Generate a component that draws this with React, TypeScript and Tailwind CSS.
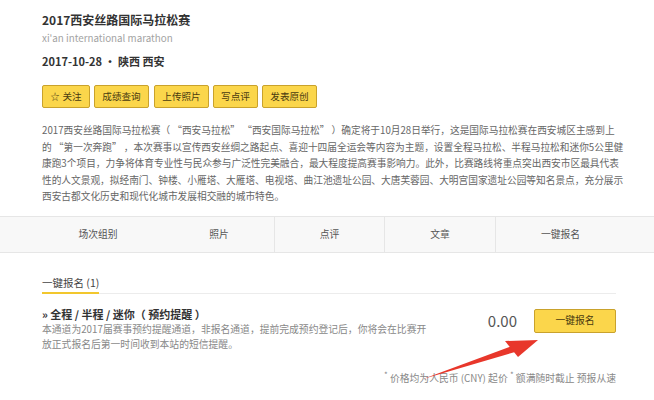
import React from "react";

const font = { fontFamily: '"Noto Sans CJK SC", "Noto Sans", sans-serif' };

const actions = ["成绩查询", "上传照片", "写点评", "发表原创"];

const intro = [
  "2017西安丝路国际马拉松赛（ “西安马拉松” “西安国际马拉松” ）确定将于10月28日举行，这是国际马拉松赛在西安城区主感到上",
  "的 “第一次奔跑” ，本次赛事以宣传西安丝绸之路起点、喜迎十四届全运会等内容为主题，设置全程马拉松、半程马拉松和迷你5公里健",
  "康跑3个项目，力争将体育专业性与民众参与广泛性完美融合，最大程度提高赛事影响力。此外，比赛路线将重点突出西安市区最具代表",
  "性的人文景观，拟经南门、钟楼、小雁塔、大雁塔、电视塔、曲江池遗址公园、大唐芙蓉园、大明宫国家遗址公园等知名景点，充分展示",
  "西安古都文化历史和现代化城市发展相交融的城市特色。",
];

function YellowButton({ children, className }: { children: React.ReactNode; className?: string }) {
  return (
    <button
      className={
        "flex items-center justify-center rounded-[2px] border border-[#c9a22c] bg-[#fbd64b] text-[9.6px] text-[#4a3b10] " +
        (className ?? "")
      }
    >
      {children}
    </button>
  );
}

export default function App() {
  return (
    <div className="relative h-[400px] w-[654px] overflow-hidden bg-white" style={font}>
      {/* 标题区 */}
      <div className="pl-[42px] pt-[11px]">
        <h1 className="h-[17px] text-[12px] font-bold leading-[17px] text-[#333]">2017西安丝路国际马拉松赛</h1>
        <p className="mt-[3px] text-[9.8px] leading-[14px] text-[#a3a3a3]">xi'an international marathon</p>
        <p className="mt-[8px] text-[11px] font-bold leading-[16px] text-[#333]">2017-10-28 • 陕西 西安</p>
        <div className="mt-[16px] flex gap-[4px]">
          <YellowButton className="h-[23px] w-[48px] gap-[3px]">
            <span className="text-[9px]">☆</span>关注
          </YellowButton>
          <YellowButton className="h-[23px] w-[55px]">{actions[0]}</YellowButton>
          <YellowButton className="ml-[1px] h-[23px] w-[55px]">{actions[1]}</YellowButton>
          <YellowButton className="h-[23px] w-[45px]">{actions[2]}</YellowButton>
          <YellowButton className="h-[23px] w-[55px]">{actions[3]}</YellowButton>
        </div>
      </div>

      {/* 简介 */}
      <div className="mt-[14px] pl-[42px] text-[9.7px] leading-[16.5px] text-[#666]">
        {intro.map((line) => (
          <div key={line} className="whitespace-nowrap">
            {line}
          </div>
        ))}
      </div>

      {/* 表头 */}
      <div className="mt-[11px] flex h-[37px] border-y border-[#e6e6e6] bg-[#f8f8f8] text-[9.8px] text-[#555]">
        <div className="flex w-[164px] items-center justify-center pl-[32px]">场次组别</div>
        <div className="flex w-[110px] items-center justify-center">照片</div>
        <div className="flex w-[110px] items-center justify-center border-l border-[#e6e6e6]">点评</div>
        <div className="flex w-[111px] items-center justify-center border-l border-[#e6e6e6]">文章</div>
        <div className="flex w-[130px] items-center justify-center border-l border-[#e6e6e6]">一键报名</div>
        <div className="flex-1" />
      </div>

      {/* 一键报名 */}
      <div className="ml-[42px] mr-[38px] mt-[22px]">
        <div className="flex border-b border-[#ececec]">
          <div className="-mb-px border-b-2 border-[#f2c72d] pb-[1px] text-[10.5px] leading-[16px] text-[#444]">
            一键报名 (1)
          </div>
        </div>

        <div className="mt-[12px] flex items-start justify-between">
          <div>
            <p className="text-[11px] font-bold leading-[16px] text-[#333]">» 全程 / 半程 / 迷你（ 预约提醒 ）</p>
            <p className="text-[9.8px] leading-[15px] text-[#888]">
              本通道为2017届赛事预约提醒通道，非报名通道，提前完成预约登记后，你将会在比赛开
              <br />
              放正式报名后第一时间收到本站的短信提醒。
            </p>
          </div>
          <div className="mt-[3px] flex items-center gap-[17px]">
            <span className="text-[15px] leading-[20px] text-[#555]">0.00</span>
            <YellowButton className="h-[24px] w-[82px] text-[9.8px]">一键报名</YellowButton>
          </div>
        </div>

        <p className="mt-[19px] text-right text-[9.8px] leading-[14px] text-[#888]">
          <sup className="text-[8px]">*</sup> 价格均为人民币 (CNY) 起价 <sup className="text-[8px]">*</sup> 额满随时截止 预报从速
        </p>
      </div>

      {/* 标注箭头 */}
      <svg className="absolute left-0 top-0" width="654" height="400" viewBox="0 0 654 400">
        <path d="M423 379 L512 346 L515 352 Z" fill="#e8372b" />
        <path d="M538 340 L505 341 L518 357 Z" fill="#e8372b" />
      </svg>
    </div>
  );
}
